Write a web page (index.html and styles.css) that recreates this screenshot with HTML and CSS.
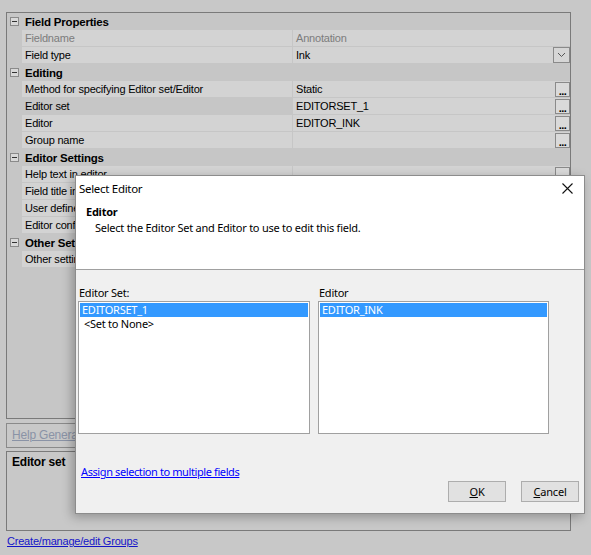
FILE: index.html
```html
<!DOCTYPE html>
<html>
<head>
<meta charset="utf-8">
<link rel="stylesheet" href="styles.css">
</head>
<body>
<div class="page">
  <div class="grid">
    <div class="cat"><span class="exp"></span><span class="cat-name">Field Properties</span></div>
    <div class="prop"><span class="gut"></span><span class="name dim">Fieldname</span><span class="val dim">Annotation</span></div>
    <div class="prop"><span class="gut"></span><span class="name">Field type</span><span class="val">Ink<span class="drop"><svg width="9" height="6" viewBox="0 0 9 6"><path d="M1 1l3.5 3.5L8 1" fill="none" stroke="#555" stroke-width="1"/></svg></span></span></div>
    <div class="cat"><span class="exp"></span><span class="cat-name">Editing</span></div>
    <div class="prop"><span class="gut"></span><span class="name">Method for specifying Editor set/Editor</span><span class="val">Static<span class="dots">...</span></span></div>
    <div class="prop sel"><span class="gut"></span><span class="name">Editor set</span><span class="val">EDITORSET_1<span class="dots">...</span></span></div>
    <div class="prop"><span class="gut"></span><span class="name">Editor</span><span class="val">EDITOR_INK<span class="dots">...</span></span></div>
    <div class="prop"><span class="gut"></span><span class="name">Group name</span><span class="val"><span class="dots">...</span></span></div>
    <div class="cat"><span class="exp"></span><span class="cat-name">Editor Settings</span></div>
    <div class="prop"><span class="gut"></span><span class="name">Help text in editor</span><span class="val"><span class="dots">...</span></span></div>
    <div class="prop"><span class="gut"></span><span class="name">Field title in editor</span><span class="val"></span></div>
    <div class="prop"><span class="gut"></span><span class="name">User defined</span><span class="val"></span></div>
    <div class="prop"><span class="gut"></span><span class="name">Editor config</span><span class="val"></span></div>
    <div class="cat"><span class="exp"></span><span class="cat-name">Other Settings</span></div>
    <div class="prop"><span class="gut"></span><span class="name">Other settings</span><span class="val"></span></div>
  </div>
  <div class="helpbar"><a class="helplink">Help General</a></div>
  <div class="desc"><b>Editor set</b></div>
  <a class="groups">Create/manage/edit Groups</a>
</div>

<div class="dialog">
  <div class="dlg-top">
    <div class="titlebar"><span class="title">Select Editor</span>
      <svg class="close" width="11" height="11" viewBox="0 0 11 11"><path d="M0.5 0.5l10 10M10.5 0.5l-10 10" stroke="#111" stroke-width="1.1" fill="none"/></svg>
    </div>
    <div class="hdr-title">Editor</div>
    <div class="hdr-sub">Select the Editor Set and Editor to use to edit this field.</div>
  </div>
  <div class="dlg-body">
    <div class="lists">
      <div class="col col-left">
        <div class="lbl">Editor Set:</div>
        <div class="listbox">
          <div class="item selected">EDITORSET_1</div>
          <div class="item">&lt;Set to None&gt;</div>
        </div>
      </div>
      <div class="col col-right">
        <div class="lbl">Editor</div>
        <div class="listbox">
          <div class="item selected">EDITOR_INK</div>
        </div>
      </div>
    </div>
    <a class="assign">Assign selection to multiple fields</a>
    <div class="buttons">
      <button class="btn"><u>O</u>K</button>
      <button class="btn"><u>C</u>ancel</button>
    </div>
  </div>
</div>
</body>
</html>
```

FILE: styles.css
```css
html, body {
  margin: 0;
  padding: 0;
}
body {
  width: 591px;
  height: 555px;
  background: #c8c8c8;
  font-family: "Liberation Sans", Arial, sans-serif;
  font-size: 11px;
  letter-spacing: -0.2px;
  color: #000;
  position: relative;
  overflow: hidden;
}
.page {
  padding: 12px 0 0 6px;
  width: 565px;
}
.grid {
  height: 407px;
  border: 1px solid #7a7a7a;
  background: #c6c6c6;
  box-sizing: border-box;
}
.cat {
  height: 17px;
  display: flex;
  align-items: center;
  background: #c6c6c6;
  font-weight: bold;
  font-size: 11.5px;
}
.exp {
  width: 9px;
  height: 9px;
  box-sizing: border-box;
  border: 1px solid #8a8a8a;
  background: #d8d8d8;
  margin: 0 6px 0 3px;
  position: relative;
}
.exp::after {
  content: "";
  position: absolute;
  left: 1px;
  top: 3px;
  width: 5px;
  height: 1px;
  background: #333;
}
.prop {
  display: flex;
  border-bottom: 1px solid #c6c6c6;
  box-sizing: border-box;
  height: 17px;
}
.gut {
  width: 15px;
  flex: none;
  background: #c6c6c6;
}
.name {
  width: 267px;
  flex: none;
  background: #d3d3d3;
  border-right: 1px solid #c6c6c6;
  padding-left: 3px;
  line-height: 16px;
  white-space: nowrap;
  overflow: hidden;
}
.prop.sel .name {
  background: #c6c6c6;
}
.val {
  flex: 1;
  background: #d3d3d3;
  padding-left: 3px;
  line-height: 16px;
  position: relative;
  white-space: nowrap;
}
.dim {
  color: #7c7c7c;
}
.dots {
  position: absolute;
  right: 0;
  top: 1px;
  width: 15px;
  height: 15px;
  box-sizing: border-box;
  border: 1px solid #8a8a8a;
  background: #dadada;
  font-weight: bold;
  font-size: 11px;
  line-height: 16px;
  text-align: center;
  letter-spacing: -0.5px;
}
.drop {
  position: absolute;
  right: 0;
  top: 0;
  width: 17px;
  height: 16px;
  box-sizing: border-box;
  border: 1px solid #8a8a8a;
  background: #d6d6d6;
  display: flex;
  align-items: center;
  justify-content: center;
}
.helpbar {
  margin-top: 4px;
  height: 25px;
  border: 1px solid #8a8a8a;
  box-sizing: border-box;
  padding: 4px 0 0 5px;
  font-size: 12px;
}
.helplink {
  color: #8a93a6;
  text-decoration: underline;
}
.desc {
  margin-top: 3px;
  height: 80px;
  border: 1px solid #7a7a7a;
  box-sizing: border-box;
  padding: 3px 0 0 5px;
  font-size: 12px;
}
.groups {
  display: block;
  margin-top: 4px;
  margin-left: 1px;
  color: #1414c8;
  text-decoration: underline;
  font-size: 11px;
}

.dialog {
  position: absolute;
  left: 75px;
  top: 175px;
  width: 510px;
  height: 339px;
  box-sizing: border-box;
  border: 1px solid #8c8c8c;
  background: #f0f0f0;
  box-shadow: -3px 3px 10px rgba(0, 0, 0, 0.28);
  font-family: "Noto Sans", "Liberation Sans", sans-serif;
  font-size: 11px;
  letter-spacing: -0.25px;
  display: flex;
  flex-direction: column;
}
.dlg-top {
  background: #fff;
  height: 93px;
  border-bottom: 1px solid #a0a0a0;
  flex: none;
}
.titlebar {
  height: 24px;
  display: flex;
  align-items: center;
  justify-content: space-between;
  padding: 0 11px 0 3px;
}
.title {
  font-size: 11.5px;
  letter-spacing: -0.3px;
}
.hdr-title {
  margin: 4px 0 0 10px;
  font-weight: bold;
  line-height: 16px;
}
.hdr-sub {
  margin: 0 0 0 19px;
  line-height: 16px;
}
.dlg-body {
  flex: 1;
  position: relative;
  padding: 15px 0 0 2px;
}
.lists {
  display: flex;
  gap: 8px;
}
.col-left {
  width: 232px;
}
.col-right {
  width: 231px;
}
.lbl {
  padding-left: 1px;
  line-height: 16px;
  height: 16px;
}
.listbox {
  height: 133px;
  box-sizing: border-box;
  border: 1px solid #a0a0a0;
  background: #fff;
  padding: 1px;
}
.item {
  height: 14px;
  line-height: 14px;
  padding-left: 2px;
  white-space: nowrap;
}
.item.selected {
  background: #3399ff;
  color: #fff;
}
.col-left .item:not(.selected) {
  padding-left: 4px;
}
.assign {
  display: block;
  margin: 30px 0 0 3px;
  color: #0000ff;
  text-decoration: underline;
  line-height: 16px;
  letter-spacing: -0.4px;
}
.buttons {
  display: flex;
  gap: 15px;
  justify-content: flex-end;
  padding-right: 5px;
  margin-top: 1px;
}
.btn {
  width: 58px;
  height: 21px;
  background: #e1e1e1;
  border: 1px solid #adadad;
  font-family: "Noto Sans", "Liberation Sans", sans-serif;
  font-size: 11px;
  letter-spacing: -0.2px;
  padding: 0;
  color: #000;
}
```
